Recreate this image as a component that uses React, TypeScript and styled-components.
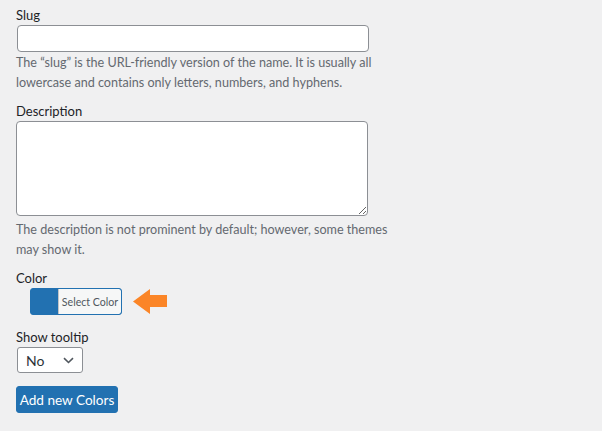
import React from "react";
import styled, { createGlobalStyle } from "styled-components";

const GlobalStyle = createGlobalStyle`
  html, body {
    margin: 0;
    padding: 0;
    background: #f0f0f1;
  }
  body {
    font-family: Lato, "Liberation Sans", sans-serif;
    font-size: 13px;
    color: #3c434a;
  }
`;

const Page = styled.div`
  padding: 6px 0 0 16px;
  width: 372px;
`;

const Field = styled.div<{ $gap?: number }>`
  display: flex;
  flex-direction: column;
  align-items: flex-start;
  margin-bottom: ${(p) => p.$gap ?? 9}px;
`;

const Label = styled.label`
  font-size: 13px;
  line-height: 19px;
  color: #1d2327;
`;

const TextInput = styled.input`
  box-sizing: border-box;
  width: 352px;
  height: 27px;
  margin: 0 0 0 1px;
  padding: 0 8px;
  border: 1px solid #8c8f94;
  border-radius: 4px;
  background: #fff;
  font: inherit;
  outline: none;
`;

const TextArea = styled.textarea`
  box-sizing: border-box;
  width: 352px;
  height: 95px;
  margin: 0 0 3px;
  padding: 2px 6px;
  border: 1px solid #8c8f94;
  border-radius: 4px;
  background: #fff;
  font: inherit;
  outline: none;
  display: block;
`;

const Help = styled.p`
  margin: 1px 0 0;
  font-size: 12.6px;
  line-height: 20px;
  color: #646970;
`;

const ColorRow = styled.div`
  display: flex;
  align-items: center;
  margin-left: 14px;
`;

const ColorButton = styled.button`
  display: flex;
  box-sizing: border-box;
  width: 92px;
  height: 27px;
  padding: 0;
  border: 1px solid #2271b1;
  border-radius: 3px;
  background: #2271b1;
  overflow: hidden;
  cursor: pointer;
`;

const Swatch = styled.span`
  width: 27px;
  flex: none;
  background: #2271b1;
`;

const ColorText = styled.span`
  flex: 1;
  display: flex;
  align-items: center;
  justify-content: center;
  background: #f6f7f7;
  border-left: 1px solid #c3c4c7;
  font-family: Lato, sans-serif;
  font-size: 10.6px;
  color: #50575e;
  border-radius: 0 2px 2px 0;
`;

const Arrow = styled.svg`
  margin-left: 11px;
  flex: none;
`;

const SelectBox = styled.div`
  box-sizing: border-box;
  margin-left: 1px;
  width: 66px;
  height: 26px;
  display: flex;
  align-items: center;
  justify-content: space-between;
  padding: 0 8px 0 8px;
  border: 1px solid #8c8f94;
  border-radius: 3px;
  background: #fff;
  font-size: 14px;
  color: #2c3338;
`;

const PrimaryButton = styled.button`
  box-sizing: border-box;
  width: 102px;
  height: 27px;
  padding: 0;
  border: 1px solid #2271b1;
  border-radius: 3px;
  background: #2271b1;
  color: #fff;
  font-family: Lato, sans-serif;
  font-size: 13.6px;
  cursor: pointer;
`;

export default function App() {
  return (
    <>
      <GlobalStyle />
      <Page>
        <Field>
          <Label>Slug</Label>
          <TextInput type="text" />
          <Help>
            The “slug” is the URL-friendly version of the name. It is usually all
            lowercase and contains only letters, numbers, and hyphens.
          </Help>
        </Field>
        <Field>
          <Label>Description</Label>
          <TextArea />
          <Help>
            The description is not prominent by default; however, some themes
            may show it.
          </Help>
        </Field>
        <Field $gap={13}>
          <Label>Color</Label>
          <ColorRow>
            <ColorButton>
              <Swatch />
              <ColorText>Select Color</ColorText>
            </ColorButton>
            <Arrow width="34" height="25" viewBox="0 0 34 25">
              <polygon
                points="0,12.5 17,0 17,6 34,6 34,18 17,18 17,25"
                fill="#fb8527"
              />
            </Arrow>
          </ColorRow>
        </Field>
        <Field $gap={13}>
          <Label>Show tooltip</Label>
          <SelectBox>
            <span>No</span>
            <svg width="11" height="7" viewBox="0 0 11 7">
              <path
                d="M1 1.2 L5.5 5.5 L10 1.2"
                fill="none"
                stroke="#50575e"
                strokeWidth="1.6"
              />
            </svg>
          </SelectBox>
        </Field>
        <PrimaryButton>Add new Colors</PrimaryButton>
      </Page>
    </>
  );
}
